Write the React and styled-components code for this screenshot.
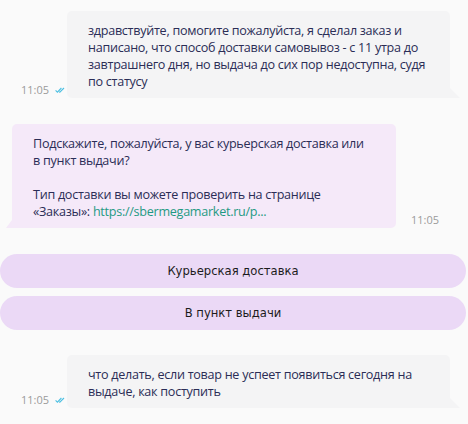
import styled, { createGlobalStyle } from "styled-components";

const GlobalStyle = createGlobalStyle`
  html, body {
    margin: 0;
    padding: 0;
    background: #fafafa;
  }
  body {
    font-family: "Open Sans", "Noto Sans", sans-serif;
  }
`;

const Chat = styled.div`
  width: 468px;
  height: 424px;
  overflow: hidden;
  background: #fafafa;
  padding-top: 11px;
  box-sizing: border-box;
  display: flex;
  flex-direction: column;
`;

const Row = styled.div`
  display: flex;
  align-items: flex-end;
  justify-content: ${(p) => (p.$out ? "flex-end" : "flex-start")};
  padding: ${(p) => (p.$out ? "0 18px 0 21px" : "0 0 0 12px")};
  margin-bottom: ${(p) => p.$gap || 0}px;
`;

const Meta = styled.div`
  display: flex;
  align-items: center;
  gap: 6px;
  padding-bottom: 1px;
  margin-right: ${(p) => (p.$out ? "auto" : "0")};
  margin-left: ${(p) => (p.$out ? "0" : "15px")};
  font-size: 11px;
  line-height: 14px;
  color: #9b9b9b;
`;

const Bubble = styled.div`
  position: relative;
  width: ${(p) => (p.$out ? "383px" : "384px")};
  box-sizing: border-box;
  padding: ${(p) => (p.$out ? "11px 21px 8px" : "11px 28px 8px 21px")};
  font-size: 12.6px;
  letter-spacing: -0.28px;
  line-height: 17px;
  color: #2b2d56;
  background: ${(p) => (p.$out ? "#f4f4f5" : "#f5e9f9")};
  border-radius: ${(p) => (p.$out ? "5px 5px 0 5px" : "5px 5px 5px 0")};

  &::after {
    content: "";
    position: absolute;
    bottom: 0;
    width: 10px;
    height: 10px;
    background: inherit;
    ${(p) =>
      p.$out
        ? `right: -10px; clip-path: polygon(0 0, 0 100%, 100% 100%);`
        : `left: -6px; width: 6px; height: 8px; clip-path: polygon(100% 0, 100% 100%, 0 100%);`}
  }

  p {
    margin: 0;
  }
`;

const Link = styled.a`
  color: #1f9a83;
  text-decoration: none;
`;

const Choice = styled.button`
  display: block;
  width: 466px;
  height: 34px;
  border: none;
  border-radius: 17px;
  background: #ebd9f6;
  font-family: "DejaVu Sans", sans-serif;
  font-size: 11.6px;
  color: #1c1c1c;
  padding: 0;
  margin-bottom: ${(p) => p.$gap || 0}px;
  cursor: pointer;
`;

const Check = () => (
  <svg width="10" height="6" viewBox="0 0 10 6" fill="none">
    <path d="M0.6 3.4 L2.4 5.2 L6.4 1" stroke="#4ec0e2" strokeWidth="1.1" />
    <path d="M4.2 4.6 L4.8 5.2 L9 1" stroke="#4ec0e2" strokeWidth="1.1" />
  </svg>
);

const App = () => {
  return (
    <>
      <GlobalStyle />
      <Chat>
        <Row $out $gap={26}>
          <Meta $out>
            <span>11:05</span>
            <Check />
          </Meta>
          <Bubble $out>
            <p>
              здравствуйте, помогите пожалуйста, я сделал заказ и написано, что
              способ доставки самовывоз - с 11 утра до завтрашнего дня, но
              выдача до сих пор недоступна, судя по статусу
            </p>
          </Bubble>
        </Row>
        <Row $gap={26}>
          <Bubble>
            <p>
              Подскажите, пожалуйста, у вас курьерская доставка или в пункт
              выдачи?
            </p>
            <p>&nbsp;</p>
            <p>
              Тип доставки вы можете проверить на странице «Заказы»:{" "}
              <Link href="#">https://sbermegamarket.ru/p...</Link>
            </p>
          </Bubble>
          <Meta>
            <span>11:05</span>
          </Meta>
        </Row>
        <Choice $gap={8}>Курьерская доставка</Choice>
        <Choice $gap={25}>В пункт выдачи</Choice>
        <Row $out>
          <Meta $out>
            <span>11:05</span>
            <Check />
          </Meta>
          <Bubble $out>
            <p>
              что делать, если товар не успеет появиться сегодня на выдаче, как
              поступить
            </p>
          </Bubble>
        </Row>
      </Chat>
    </>
  );
};

export default App;
